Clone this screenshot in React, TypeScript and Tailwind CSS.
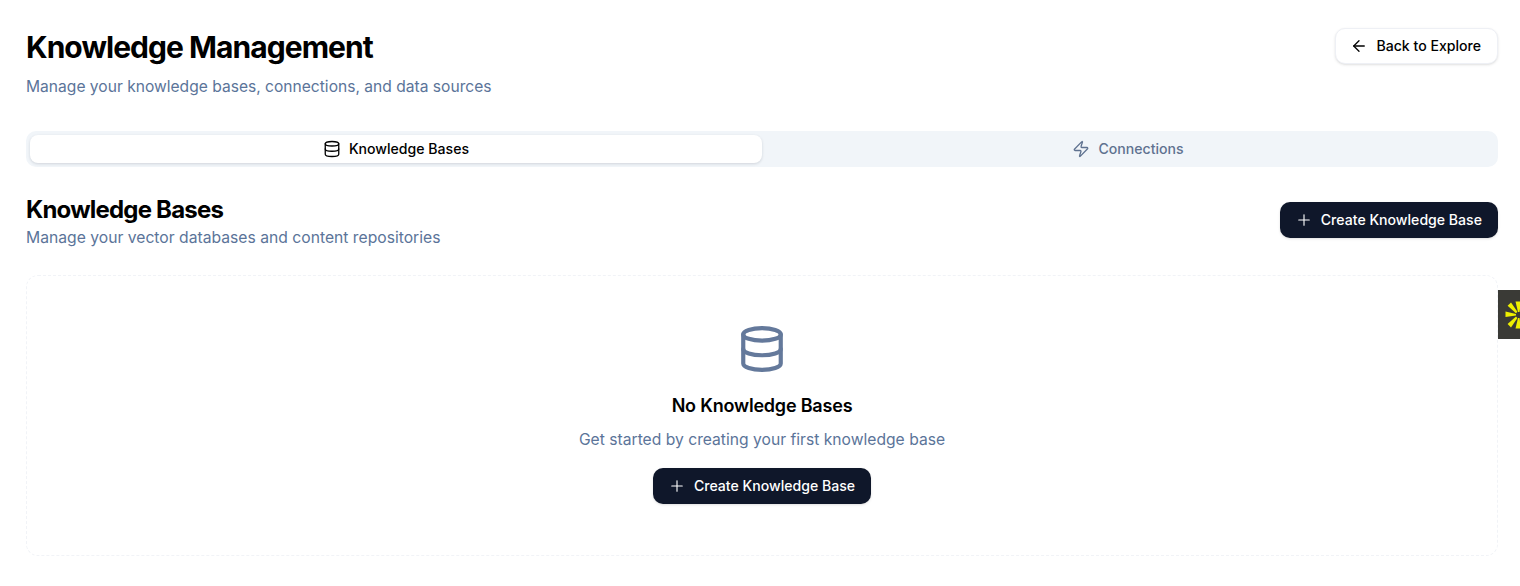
import { ArrowLeft, Database, Plus, Zap } from "lucide-react";

function CreateButton() {
  return (
    <button className="flex h-[36px] items-center gap-[8px] rounded-[10px] bg-[#0f172a] pl-[15px] pr-[16px] text-[14.1px] font-medium text-white shadow-sm">
      <Plus className="h-[18px] w-[18px]" strokeWidth={1.5} />
      Create Knowledge Base
    </button>
  );
}

export default function App() {
  return (
    <div className="relative h-[586px] overflow-hidden bg-white pl-[26px] pr-[22px] pt-[28px] font-['Inter',sans-serif] text-black">
      <header className="flex items-start justify-between">
        <div>
          <h1 className="text-[30px] font-bold leading-[38px] tracking-[-0.95px]">Knowledge Management</h1>
          <p className="mt-[9px] text-[15.6px] leading-[24px] text-[#5b7499]">
            Manage your knowledge bases, connections, and data sources
          </p>
        </div>
        <button className="flex h-[36px] items-center gap-[8px] rounded-[10px] border border-[#eef0f5] bg-white pl-[14px] pr-[16px] text-[14.1px] font-medium shadow-sm">
          <ArrowLeft className="h-[18px] w-[18px]" strokeWidth={1.75} />
          Back to Explore
        </button>
      </header>

      <div className="mt-[32px] flex h-[36px] rounded-[10px] bg-[#f1f5f9] p-[4px]">
        <div className="flex h-[28px] flex-1 items-center justify-center gap-[8px] rounded-[8px] bg-white text-[14.1px] font-medium shadow-[0_1px_3px_rgba(15,23,42,0.14)]">
          <Database className="h-[18px] w-[18px]" strokeWidth={1.75} />
          Knowledge Bases
        </div>
        <div className="flex h-[28px] flex-1 items-center justify-center gap-[8px] rounded-[8px] text-[14.1px] font-medium text-[#5f7290]">
          <Zap className="h-[18px] w-[18px]" strokeWidth={1.75} />
          Connections
        </div>
      </div>

      <section className="mt-[28px] flex items-start justify-between">
        <div>
          <h2 className="text-[24px] font-bold leading-[30px] tracking-[-0.8px]">Knowledge Bases</h2>
          <p className="mt-[1px] text-[15.7px] leading-[24px] text-[#5b7499]">
            Manage your vector databases and content repositories
          </p>
        </div>
        <div className="mt-[7px]">
          <CreateButton />
        </div>
      </section>

      <section className="mt-[25px] flex h-[281px] flex-col items-center rounded-[12px] border border-dashed border-[#f1f3f7] pt-[48px]">
        <Database className="h-[50px] w-[50px] text-[#64799b]" strokeWidth={2} />
        <h3 className="mt-[18px] text-[18px] font-semibold leading-[28px] tracking-[-0.2px]">No Knowledge Bases</h3>
        <p className="mt-[8px] text-[15.66px] leading-[24px] text-[#5b7499]">
          Get started by creating your first knowledge base
        </p>
        <div className="mt-[16px]">
          <CreateButton />
        </div>
      </section>

      <div className="absolute right-0 top-[290px] h-[49px] w-[22px] overflow-hidden bg-[#3a3a36]">
        <svg className="absolute left-[7px] top-[11px] h-[28px] w-[28px]" viewBox="0 0 28 28" fill="#eef000">
          <path d="M10.5 0.5h5.5L14.5 11h-1.5z" />
          <path d="M10.5 27.5h5.5L14.5 17h-1.5z" />
          <path d="M0.5 10.5v5.5L11 14.6v-1.6z" />
          <path d="M2.6 4.8l3.4-3.4 6.4 9.4-1.4 1.4z" />
          <path d="M6 26.4l-3.4-3.4 8.4-7.4 1.4 1.4z" />
          <path d="M16 14l12-3v6z" />
        </svg>
      </div>
    </div>
  );
}
